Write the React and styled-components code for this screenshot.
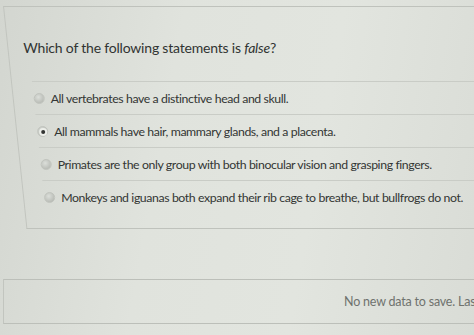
import React from 'react';
import styled, { createGlobalStyle } from 'styled-components';

const GlobalStyle = createGlobalStyle`
  html, body {
    margin: 0;
    padding: 0;
    background: #dcdfd9;
  }
  body {
    font-family: Lato, "Open Sans", sans-serif;
  }
`;

const options = [
  { text: 'All vertebrates have a distinctive head and skull.' },
  { text: 'All mammals have hair, mammary glands, and a placenta.', checked: true },
  { text: 'Primates are the only group with both binocular vision and grasping fingers.' },
  { text: 'Monkeys and iguanas both expand their rib cage to breathe, but bullfrogs do not.' },
];

function Radio({ checked }) {
  return (
    <RadioCircle>
      {checked && <RadioDot />}
    </RadioCircle>
  );
}

function OptionRow({ text, checked }) {
  return (
    <Row>
      <RowContent>
        <Radio checked={checked} />
        <OptionText>{text}</OptionText>
      </RowContent>
    </Row>
  );
}

export default function App() {
  return (
    <React.Fragment>
      <GlobalStyle />
      <Screen>
        <QuestionCard>
          <QuestionHead>
            <QuestionText>
              Which of the following statements is <em>false</em>?
            </QuestionText>
          </QuestionHead>
          <OptionList>
            {options.map((option) => (
              <OptionRow key={option.text} {...option} />
            ))}
          </OptionList>
        </QuestionCard>

        <SaveBar>
          <SaveStatus>No new data to save. Last saved</SaveStatus>
        </SaveBar>
      </Screen>
    </React.Fragment>
  );
}

const Screen = styled.div`
  width: 474px;
  height: 335px;
  overflow: hidden;
  padding-top: 6px;
  box-sizing: border-box;
  background: linear-gradient(
    100deg,
    #d3d6d0 0%,
    #e0e3dd 35%,
    #e2e5df 65%,
    #d9dcd6 100%
  );
`;

const QuestionCard = styled.div`
  width: 520px;
  height: 223px;
  box-sizing: border-box;
  margin-left: 3px;
  border-top: 1px solid #bfc2bc;
  border-left: 1px solid #c2c5bf;
  border-bottom: 1px solid #bfc2bc;
  transform: skewX(6deg);
  transform-origin: top left;
`;

const QuestionHead = styled.div`
  height: 74px;
  display: flex;
  align-items: center;
  padding: 6px 0 0 15px;
  box-sizing: border-box;
`;

const QuestionText = styled.div`
  transform: skewX(-6deg);
  transform-origin: left center;
  font-size: 14px;
  color: #313432;
  letter-spacing: -0.2px;

  em {
    font-style: italic;
  }
`;

const OptionList = styled.div`
  margin-left: 20px;
`;

const Row = styled.div`
  height: 33px;
  box-sizing: border-box;
  border-top: 1px solid #c9ccc6;
  display: flex;
  align-items: center;
`;

const RowContent = styled.div`
  display: flex;
  align-items: center;
  gap: 6px;
  transform: skewX(-6deg);
  transform-origin: left center;
`;

const RadioCircle = styled.span`
  width: 11px;
  height: 11px;
  border-radius: 50%;
  box-sizing: border-box;
  border: 1px solid #c0c3bd;
  background: radial-gradient(circle at 40% 35%, #dcdfda 0%, #aeb1ab 100%);
  display: flex;
  align-items: center;
  justify-content: center;
  flex: none;
`;

const RadioDot = styled.span`
  width: 4px;
  height: 4px;
  border-radius: 50%;
  background: #333533;
  box-shadow: 0 0 0 2px #eceee9;
`;

const OptionText = styled.span`
  font-size: 12.3px;
  color: #333634;
  letter-spacing: -0.4px;
  white-space: nowrap;
`;

const SaveBar = styled.div`
  margin-top: 50px;
  margin-left: 3px;
  height: 45px;
  box-sizing: border-box;
  border-top: 1px solid #bcbfb9;
  border-left: 1px solid #c2c5bf;
  border-bottom: 1px solid #bcbfb9;
  display: flex;
  align-items: center;
  padding-left: 340px;
  white-space: nowrap;
  overflow: hidden;
`;

const SaveStatus = styled.span`
  font-size: 12.5px;
  color: #6f726e;
  letter-spacing: -0.2px;
`;
